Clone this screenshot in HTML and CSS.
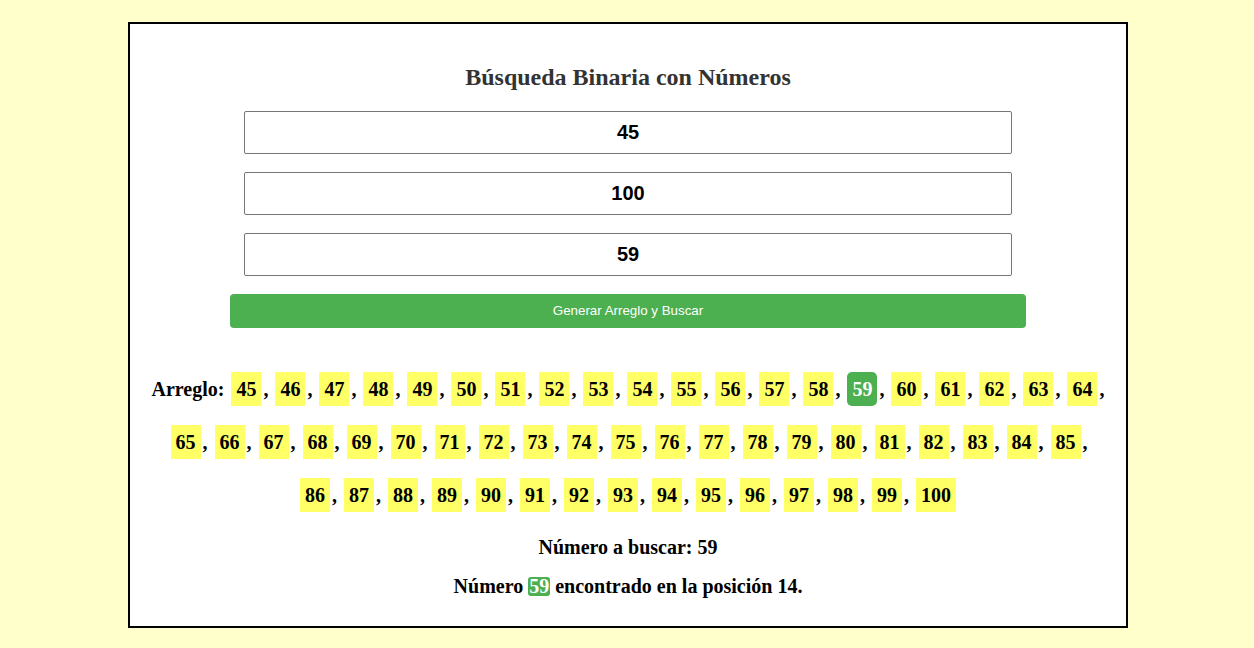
FILE: index.html
```html
<!DOCTYPE html>
<html lang="es">
<head>
<meta charset="utf-8">
<title>Búsqueda Binaria con Números</title>
<link rel="stylesheet" href="styles.css">
</head>
<body>
<div class="container">
  <h2 class="title">Búsqueda Binaria con Números</h2>
  <div class="form">
    <input class="field" type="text" value="45">
    <input class="field" type="text" value="100">
    <input class="field" type="text" value="59">
    <button class="btn" type="button">Generar Arreglo y Buscar</button>
  </div>
  <div class="array"><span class="label">Arreglo:</span> <span class="n">45</span>, <span class="n">46</span>, <span class="n">47</span>, <span class="n">48</span>, <span class="n">49</span>, <span class="n">50</span>, <span class="n">51</span>, <span class="n">52</span>, <span class="n">53</span>, <span class="n">54</span>, <span class="n">55</span>, <span class="n">56</span>, <span class="n">57</span>, <span class="n">58</span>, <span class="n found">59</span>, <span class="n">60</span>, <span class="n">61</span>, <span class="n">62</span>, <span class="n">63</span>, <span class="n">64</span>, <span class="n">65</span>, <span class="n">66</span>, <span class="n">67</span>, <span class="n">68</span>, <span class="n">69</span>, <span class="n">70</span>, <span class="n">71</span>, <span class="n">72</span>, <span class="n">73</span>, <span class="n">74</span>, <span class="n">75</span>, <span class="n">76</span>, <span class="n">77</span>, <span class="n">78</span>, <span class="n">79</span>, <span class="n">80</span>, <span class="n">81</span>, <span class="n">82</span>, <span class="n">83</span>, <span class="n">84</span>, <span class="n">85</span>, <span class="n">86</span>, <span class="n">87</span>, <span class="n">88</span>, <span class="n">89</span>, <span class="n">90</span>, <span class="n">91</span>, <span class="n">92</span>, <span class="n">93</span>, <span class="n">94</span>, <span class="n">95</span>, <span class="n">96</span>, <span class="n">97</span>, <span class="n">98</span>, <span class="n">99</span>, <span class="n">100</span></div>
  <p class="info target">Número a buscar: 59</p>
  <p class="info result">Número <span class="hit">59</span> encontrado en la posición 14.</p>
</div>
</body>
</html>
```
FILE: styles.css
```css
html, body {
  margin: 0;
  padding: 0;
}
body {
  background: #ffffcc;
  font-family: "Liberation Serif", "Times New Roman", serif;
  color: #000;
  padding-left: 2px;
}
.container {
  box-sizing: border-box;
  width: 1000px;
  margin: 22px auto 0;
  padding: 20px;
  border: 2px solid #000;
  background: #fff;
  text-align: center;
}
.title {
  font-size: 24px;
  font-weight: bold;
  color: #333;
  margin: 20px 0 19px;
  line-height: 27.6px;
}
.form {
  display: flex;
  flex-direction: column;
  align-items: center;
  gap: 18px;
}
.field {
  box-sizing: border-box;
  width: 768px;
  height: 43px;
  margin: 0;
  padding: 0 10px;
  border: 1px solid #767676;
  border-radius: 2px;
  font-family: "Liberation Sans", Arial, sans-serif;
  font-size: 20px;
  font-weight: bold;
  text-align: center;
  color: #000;
  background: #fff;
}
.btn {
  box-sizing: border-box;
  width: 796px;
  height: 34px;
  margin: 0;
  border: none;
  border-radius: 4px;
  background: #4caf50;
  color: #fff;
  font-family: "Liberation Sans", Arial, sans-serif;
  font-size: 13.33px;
  cursor: pointer;
}
.array {
  margin-top: 35.5px;
  font-size: 20px;
  font-weight: bold;
  line-height: 53px;
}
.n {
  display: inline-block;
  line-height: 22px;
  padding: 6px 5px;
  margin: 0 2px;
  background: #ffff66;
}
.n.found {
  background: #4caf50;
  color: #fff;
  border-radius: 5px;
}
.info {
  font-size: 20px;
  font-weight: bold;
  line-height: 23px;
  margin: 0;
}
.target {
  margin-top: 14px;
}
.result {
  margin-top: 16px;
  margin-bottom: 8px;
}
.hit {
  display: inline-block;
  line-height: 19px;
  padding: 0 1px;
  background: #4caf50;
  color: #fff;
  border-radius: 3px;
}
```
